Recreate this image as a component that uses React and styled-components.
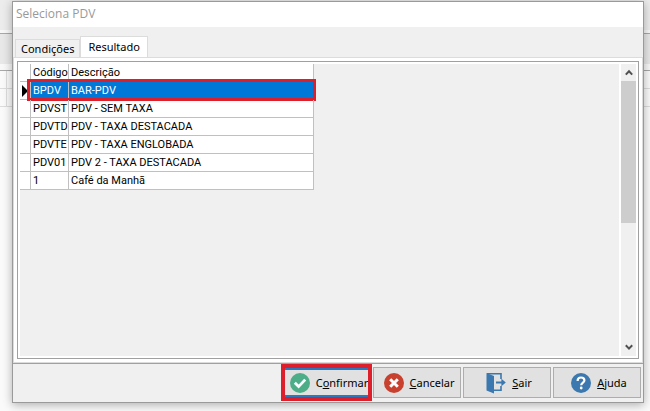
import React, { useState } from "react";
import styled, { createGlobalStyle, css } from "styled-components";

const rows = [
    { codigo: 'BPDV', descricao: 'BAR-PDV' },
    { codigo: 'PDVST', descricao: 'PDV - SEM TAXA' },
    { codigo: 'PDVTD', descricao: 'PDV - TAXA DESTACADA' },
    { codigo: 'PDVTE', descricao: 'PDV - TAXA ENGLOBADA' },
    { codigo: 'PDV01', descricao: 'PDV 2 - TAXA DESTACADA' },
    { codigo: '1', descricao: 'Café da Manhã' },
]

export default function App() {
    const [tab, setTab] = useState('resultado')
    const [selected, setSelected] = useState('BPDV')

    return (
        <>
        <GlobalStyle />
        <Page>
            <Backdrop aria-hidden="true">
                <BackBar />
                <BackPanel />
                <BackRow />
                <BackRow />
                <BackGrid />
            </Backdrop>
            <Dialog role="dialog" aria-labelledby="dialog-title">
                <TitleBar id="dialog-title">Seleciona PDV</TitleBar>
                <Tabs role="tablist">
                    <Tab role="tab" aria-selected={tab === 'condicoes'} $active={tab === 'condicoes'} onClick={() => setTab('condicoes')}>Condições</Tab>
                    <Tab role="tab" aria-selected={tab === 'resultado'} $active={tab === 'resultado'} onClick={() => setTab('resultado')}>Resultado</Tab>
                </Tabs>
                <TabPage>
                    <ResultBox>
                        <ResultArea>
                            {tab === 'resultado' && (
                                <Table>
                                    <thead>
                                        <tr>
                                            <Th $width="11px" />
                                            <Th $width="38px">Código</Th>
                                            <Th>Descrição</Th>
                                        </tr>
                                    </thead>
                                    <tbody>
                                        {rows.map(row => (
                                            <Row key={row.codigo} $selected={row.codigo === selected} onClick={() => setSelected(row.codigo)}>
                                                <Td>{row.codigo === selected && <Pointer />}</Td>
                                                <Td>{row.codigo}</Td>
                                                <Td>{row.descricao}</Td>
                                            </Row>
                                        ))}
                                    </tbody>
                                </Table>
                            )}
                        </ResultArea>
                        <ScrollBar>
                            <ScrollButton aria-label="Rolar para cima"><Chevron /></ScrollButton>
                            <ScrollThumb />
                            <ScrollButton aria-label="Rolar para baixo"><Chevron down /></ScrollButton>
                        </ScrollBar>
                    </ResultBox>
                </TabPage>
                <Footer>
                    <ActionButton $highlight><CheckIcon /><span>C<u>o</u>nfirmar</span></ActionButton>
                    <ActionButton><CancelIcon /><span><u>C</u>ancelar</span></ActionButton>
                    <ActionButton><ExitIcon /><span><u>S</u>air</span></ActionButton>
                    <ActionButton><HelpIcon /><span><u>A</u>juda</span></ActionButton>
                </Footer>
            </Dialog>
        </Page>
        </>
    )
}

const Pointer = () => (
    <svg width="6" height="12" viewBox="0 0 6 12">
        <path d="M0 0L6 6L0 12Z" fill="#000" />
    </svg>
)

const Chevron = ({ down }) => (
    <svg width="8" height="7" viewBox="0 0 8 7">
        <path d={down ? 'M0.8 1.2L4 4.6L7.2 1.2' : 'M0.8 5.6L4 2.2L7.2 5.6'} fill="none" stroke="#505050" strokeWidth="2" />
    </svg>
)

const CheckIcon = () => (
    <svg width="20" height="20" viewBox="0 0 20 20">
        <circle cx="10" cy="10" r="10" fill="#4bae89" />
        <path d="M4.8 9.8L8.6 13.6L15.2 6.6" fill="none" stroke="#fff" strokeWidth="2.8" />
    </svg>
)

const CancelIcon = () => (
    <svg width="20" height="20" viewBox="0 0 20 20">
        <circle cx="10" cy="10" r="10" fill="#c8412f" />
        <path d="M6.2 6.2L13.8 13.8M13.8 6.2L6.2 13.8" fill="none" stroke="#fff" strokeWidth="3" />
    </svg>
)

const ExitIcon = () => (
    <svg width="20" height="22" viewBox="0 0 20 22">
        <path d="M0.5 1L8 4V21.6L0.5 18.6Z" fill="#3b78b0" />
        <path d="M1 1.8H15V7M15 14V18.2H8" fill="none" stroke="#3b78b0" strokeWidth="1.6" />
        <path d="M10 10.5H17" stroke="#3b78b0" strokeWidth="2" />
        <path d="M15.4 6.8L19.8 10.5L15.4 14.2Z" fill="#3b78b0" />
    </svg>
)

const HelpIcon = () => (
    <svg width="20" height="20" viewBox="0 0 20 20">
        <circle cx="10" cy="10" r="10" fill="#3b78b0" />
        <path d="M6.6 8C6.6 5.6 8 4.5 10 4.5C12 4.5 13.4 5.6 13.4 7.4C13.4 9.6 10.2 9.6 10.2 12.2" fill="none" stroke="#fff" strokeWidth="2.2" />
        <circle cx="10.2" cy="15" r="1.4" fill="#fff" />
    </svg>
)

const GlobalStyle = createGlobalStyle`
    *{
        box-sizing: border-box;
    }
    body{
        margin: 0;
        font-family: "Noto Sans", "Open Sans", sans-serif;
        font-size: 11px;
        color: #000000;
        background: #fafafa;
    }
    button{
        font: inherit;
        color: inherit;
        margin: 0;
    }
`
const Page = styled.div`
    position: relative;
    min-height: 100vh;
    display: flex;
    padding: 1px 6px 8px 12px;
`
const Backdrop = styled.div`
    position: absolute;
    inset: 0;
    display: flex;
    flex-direction: column;
`
const BackBar = styled.div`
    height: 34px;
    background: #ececec;
    border-bottom: 1px solid #a8a8a8;
    box-shadow: inset 0 -3px #f8f8f8;
`
const BackPanel = styled.div`
    height: 37px;
    background: #e8e8e8;
    border-bottom: 1px solid #a8a8a8;
    box-shadow: inset 0 -6px #f8f8f8;
`
const BackRow = styled.div`
    height: 18px;
    background: #fafafa;
    border-bottom: 1px solid #dcdcdc;

    &::before{
        content: '';
        display: block;
        width: 6px;
        height: 100%;
        border-right: 1px solid #dcdcdc;
    }
`
const BackGrid = styled.div`
    flex: 1;
    background: #fafafa;
`
const Dialog = styled.section`
    position: relative;
    flex: 1;
    display: flex;
    flex-direction: column;
    background: #f0f0f0;
    border: 1px solid #9a9a9a;
    box-shadow: 0 2px 9px rgba(0,0,0,0.3);
`
const TitleBar = styled.header`
    height: 25px;
    padding: 3px;
    line-height: 18px;
    color: #999999;
    background: #ffffff;
    font-family: "Open Sans", sans-serif;
    font-size: 12px;
`
const Tabs = styled.div`
    display: flex;
    align-items: flex-end;
    height: 30px;
    padding: 0 2px;
`
const Tab = styled.button`
    height: 18px;
    padding: 1px 5px 0;
    line-height: 16px;
    border: 1px solid #dcdcdc;
    border-bottom: 0;
    background: #f0f0f0;

    ${({ $active }) => $active && css`
        height: 21px;
        padding: 0 7px;
        background: #ffffff;
    `}
`
const TabPage = styled.div`
    flex: 1;
    display: flex;
    padding: 3px;
    background: #ffffff;
    border: 1px solid #dcdcdc;
`
const ResultBox = styled.div`
    flex: 1;
    display: flex;
    border: 1px solid #a0a0a0;
    padding: 2px;
`
const ResultArea = styled.div`
    flex: 1;
    background: #f0f0f0;
`
const Table = styled.table`
    width: 294px;
    table-layout: fixed;
    border-collapse: separate;
    border-spacing: 0;
    background: #ffffff;
    font-family: Roboto, "Liberation Sans", sans-serif;
    font-size: 11px;
    line-height: 17px;
`
const cell = css`
    height: 18px;
    padding: 0 0 0 2px;
    text-align: left;
    font-weight: normal;
    white-space: nowrap;
    border-right: 1px solid #c0c0c0;
    border-bottom: 1px solid #c0c0c0;
`
const Th = styled.th`
    ${cell}
    width: ${({ $width }) => $width || 'auto'};
`
const Td = styled.td`
    ${cell}

    svg{
        display: block;
    }
`
const Row = styled.tr`
    position: relative;

    ${({ $selected }) => $selected && css`
        ${Td}:not(:first-child){
            color: #ffffff;
            background: #0078d7;
        }
        ${Td}:last-child::after{
            content: '';
            position: absolute;
            inset: -3px -2px -1px 7px;
            border: 3px solid #dc1f2b;
        }
    `}
`
const ScrollBar = styled.div`
    display: flex;
    flex-direction: column;
    width: 17px;
    background: #f0f0f0;
    border-left: 2px solid #ffffff;
`
const ScrollButton = styled.button`
    display: flex;
    align-items: center;
    justify-content: center;
    height: 17px;
    padding: 0;
    border: 0;
    background: none;
`
const ScrollThumb = styled.div`
    height: 142px;
    margin-bottom: auto;
    background: #cdcdcd;
`
const Footer = styled.footer`
    display: flex;
    justify-content: flex-end;
    gap: 2px;
    padding: 3px 2px 4px;
    border-top: 1px solid #a0a0a0;
`
const ActionButton = styled.button`
    position: relative;
    display: flex;
    align-items: center;
    justify-content: center;
    gap: 6px;
    width: 88px;
    height: 31px;
    padding: 0 0 0 4px;
    background: #e1e1e1;
    border: 1px solid #adadad;

    ${({ $highlight }) => $highlight && css`
        border-width: 3px 1px;
        border-color: #2a78bd;

        &::after{
            content: '';
            position: absolute;
            inset: -6px -2px -6px -3px;
            border: 4px solid #dc1f2b;
        }
    `}
`
